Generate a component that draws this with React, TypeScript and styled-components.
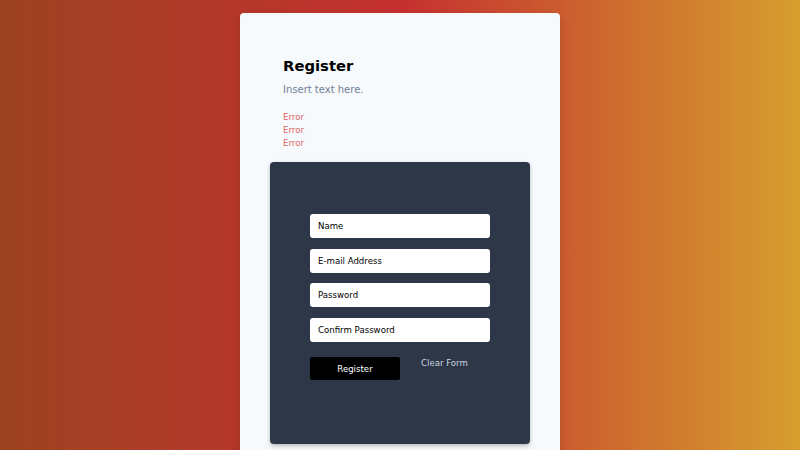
import React from 'react'
import styled, { createGlobalStyle } from 'styled-components'

const GlobalStyle = createGlobalStyle`
  html, body {
    margin: 0;
    padding: 0;
    height: 100%;
    overflow: hidden;
  }
  body {
    font-family: 'DejaVu Sans', sans-serif;
  }
`

const Page = styled.div`
  height: 100vh;
  display: flex;
  justify-content: center;
  align-items: flex-start;
  padding-top: 13px;
  box-sizing: border-box;
  background: linear-gradient(90deg, #9c4221 0%, #c53030 50%, #d69e2e 100%);
`

const Card = styled.div`
  width: 320px;
  box-sizing: border-box;
  background: #f7fafc;
  border-radius: 4px 4px 0 0;
  padding: 44px 30px 120px;
  box-shadow: 0 4px 10px rgba(0, 0, 0, 0.15);
`

const Header = styled.div`
  padding: 0 13px;
`

const Title = styled.h1`
  margin: 0;
  font-size: 14.8px;
  font-weight: 700;
  color: #000;
`

const Subtitle = styled.p`
  margin: 10px 0 0;
  font-size: 10px;
  color: #718096;
`

const Errors = styled.ul`
  list-style: none;
  margin: 16px 0 0;
  padding: 0;
`

const ErrorItem = styled.li`
  font-size: 8.6px;
  line-height: 13px;
  color: #e06666;
`

const Panel = styled.form`
  margin-top: 12px;
  background: #2d3748;
  border-radius: 4px;
  padding: 52px 40px 64px;
  box-shadow: 0 2px 4px rgba(0, 0, 0, 0.25);
  display: flex;
  flex-direction: column;
  gap: 10.5px;
`

const Field = styled.input`
  height: 24px;
  box-sizing: border-box;
  border: none;
  border-radius: 3px;
  background: #fff;
  padding: 0 8px;
  font-family: 'DejaVu Sans', sans-serif;
  font-size: 8.6px;
  color: #000;
  outline: none;
  &::placeholder {
    color: #000;
    opacity: 1;
  }
`

const Actions = styled.div`
  margin-top: 4.5px;
  display: flex;
  align-items: flex-start;
`

const SubmitButton = styled.button`
  width: 90px;
  height: 23px;
  border: none;
  border-radius: 2px;
  background: #000;
  color: #fff;
  font-family: 'DejaVu Sans', sans-serif;
  font-size: 8.6px;
  padding: 1px 0 0;
  cursor: pointer;
`

const ClearLink = styled.button`
  margin-left: 21px;
  padding: 1px 0 0;
  border: none;
  background: transparent;
  color: #cbd5e0;
  font-family: 'DejaVu Sans', sans-serif;
  font-size: 8.6px;
  cursor: pointer;
`

const fields = ['Name', 'E-mail Address', 'Password', 'Confirm Password']

export default function App() {
  return (
    <>
      <GlobalStyle />
      <Page>
        <Card>
          <Header>
            <Title>Register</Title>
            <Subtitle>Insert text here.</Subtitle>
            <Errors>
              <ErrorItem>Error</ErrorItem>
              <ErrorItem>Error</ErrorItem>
              <ErrorItem>Error</ErrorItem>
            </Errors>
          </Header>
          <Panel onSubmit={(e) => e.preventDefault()}>
            {fields.map((f) => (
              <Field
                key={f}
                placeholder={f}
                type={f.includes('Password') ? 'password' : 'text'}
              />
            ))}
            <Actions>
              <SubmitButton type="submit">Register</SubmitButton>
              <ClearLink type="reset">Clear Form</ClearLink>
            </Actions>
          </Panel>
        </Card>
      </Page>
    </>
  )
}
